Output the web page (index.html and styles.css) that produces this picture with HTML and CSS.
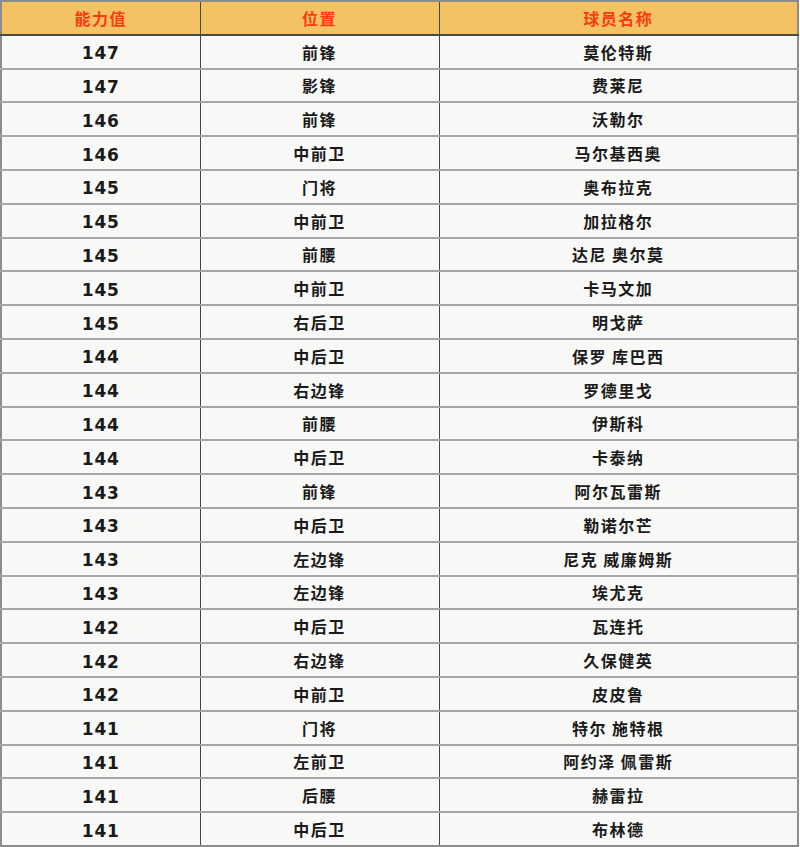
FILE: index.html
```html
<!DOCTYPE html>
<html lang="zh">
<head>
<meta charset="utf-8">
<title>球员能力值</title>
<link rel="stylesheet" href="styles.css">
</head>
<body>
<table class="rank">
<colgroup><col class="c1"><col class="c2"><col class="c3"></colgroup>
<thead>
<tr><th>能力值</th><th>位置</th><th>球员名称</th></tr>
</thead>
<tbody>
<tr><td class="num">147</td><td>前锋</td><td>莫伦特斯</td></tr>
<tr><td class="num">147</td><td>影锋</td><td>费莱尼</td></tr>
<tr><td class="num">146</td><td>前锋</td><td>沃勒尔</td></tr>
<tr><td class="num">146</td><td>中前卫</td><td>马尔基西奥</td></tr>
<tr><td class="num">145</td><td>门将</td><td>奥布拉克</td></tr>
<tr><td class="num">145</td><td>中前卫</td><td>加拉格尔</td></tr>
<tr><td class="num">145</td><td>前腰</td><td>达尼 奥尔莫</td></tr>
<tr><td class="num">145</td><td>中前卫</td><td>卡马文加</td></tr>
<tr><td class="num">145</td><td>右后卫</td><td>明戈萨</td></tr>
<tr><td class="num">144</td><td>中后卫</td><td>保罗 库巴西</td></tr>
<tr><td class="num">144</td><td>右边锋</td><td>罗德里戈</td></tr>
<tr><td class="num">144</td><td>前腰</td><td>伊斯科</td></tr>
<tr><td class="num">144</td><td>中后卫</td><td>卡泰纳</td></tr>
<tr><td class="num">143</td><td>前锋</td><td>阿尔瓦雷斯</td></tr>
<tr><td class="num">143</td><td>中后卫</td><td>勒诺尔芒</td></tr>
<tr><td class="num">143</td><td>左边锋</td><td>尼克 威廉姆斯</td></tr>
<tr><td class="num">143</td><td>左边锋</td><td>埃尤克</td></tr>
<tr><td class="num">142</td><td>中后卫</td><td>瓦连托</td></tr>
<tr><td class="num">142</td><td>右边锋</td><td>久保健英</td></tr>
<tr><td class="num">142</td><td>中前卫</td><td>皮皮鲁</td></tr>
<tr><td class="num">141</td><td>门将</td><td>特尔 施特根</td></tr>
<tr><td class="num">141</td><td>左前卫</td><td>阿约泽 佩雷斯</td></tr>
<tr><td class="num">141</td><td>后腰</td><td>赫雷拉</td></tr>
<tr><td class="num">141</td><td>中后卫</td><td>布林德</td></tr>
</tbody>
</table>
</body>
</html>
```

FILE: styles.css
```css
html, body {
  margin: 0;
  padding: 0;
  background: #ffffff;
}

.rank {
  border-collapse: collapse;
  table-layout: fixed;
  width: 799px;
  border: 2px solid #8c8c8c;
  font-family: "Noto Sans CJK SC", "DejaVu Sans", sans-serif;
  font-weight: 700;
  font-size: 16px;
  color: #1a1a1a;
  background: #f8f8f6;
}

.c1 { width: 199px; }
.c2 { width: 239px; }
.c3 { width: auto; }

.rank th,
.rank td {
  height: 33.8px;
  padding: 0;
  text-align: center;
  vertical-align: middle;
  line-height: 1;
  letter-spacing: 1.5px;
  border-left: 1.5px solid #454545;
  border-right: 1.5px solid #454545;
  border-top: 2px solid #a6a6a6;
  border-bottom: 2px solid #a6a6a6;
  box-sizing: border-box;
}

.rank th:first-child,
.rank td:first-child {
  border-left: 2px solid #8c8c8c;
}

.rank th:last-child,
.rank td:last-child {
  border-right: 2px solid #8c8c8c;
}

.rank thead th {
  background: #f3c262;
  color: #ff3a12;
  border-bottom: 2px solid #4a4a4a;
  border-top: 2px solid #8c8c8c;
}

.rank tbody tr:last-child td {
  border-bottom: 2px solid #8c8c8c;
}

.rank td.num {
  font-family: "DejaVu Sans", sans-serif;
  font-size: 17px;
  letter-spacing: 0.8px;
  padding-top: 4px;
}
```
